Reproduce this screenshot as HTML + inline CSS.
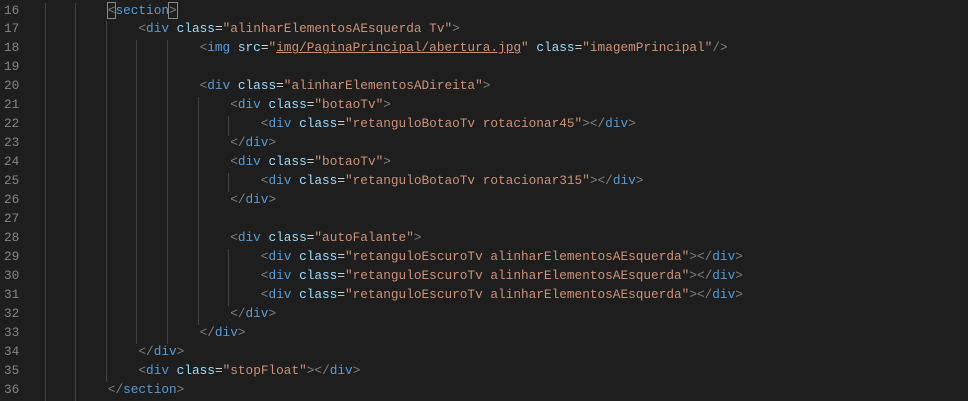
<!DOCTYPE html>
<html><head><style>
body{margin:0;background:#1e1e1e;width:968px;height:400px;overflow:hidden;position:relative;font-family:"Liberation Mono",monospace;font-size:12.75px;}
.ln{position:absolute;left:4px;color:#858585;}
.c{position:absolute;white-space:pre;color:#d4d4d4;}
.g{position:absolute;width:1px;background:#404040;}
.p{color:#808080}.t{color:#569cd6}.a{color:#9cdcfe}.s{color:#ce9178}.e{color:#d4d4d4}
.u{text-decoration:underline;text-decoration-color:#ce9178}
.box{outline:1px solid #888;}
</style></head><body>
<div id="r"></div>
<script>
const L=[
[16,3,'<span class="p box">&lt;</span><span class="t">section</span><span class="p box">&gt;</span>',2],
[17,4,'<span class="p">&lt;</span><span class="t">div</span> <span class="a">class</span><span class="e">=</span><span class="s">"alinharElementosAEsquerda Tv"</span><span class="p">&gt;</span>',3],
[18,6,'<span class="p">&lt;</span><span class="t">img</span> <span class="a">src</span><span class="e">=</span><span class="s">"<span class="u">img/PaginaPrincipal/abertura.jpg</span>"</span> <span class="a">class</span><span class="e">=</span><span class="s">"imagemPrincipal"</span><span class="p">/&gt;</span>',5],
[19,0,'',5],
[20,6,'<span class="p">&lt;</span><span class="t">div</span> <span class="a">class</span><span class="e">=</span><span class="s">"alinharElementosADireita"</span><span class="p">&gt;</span>',5],
[21,7,'<span class="p">&lt;</span><span class="t">div</span> <span class="a">class</span><span class="e">=</span><span class="s">"botaoTv"</span><span class="p">&gt;</span>',6],
[22,8,'<span class="p">&lt;</span><span class="t">div</span> <span class="a">class</span><span class="e">=</span><span class="s">"retanguloBotaoTv rotacionar45"</span><span class="p">&gt;&lt;/</span><span class="t">div</span><span class="p">&gt;</span>',7],
[23,7,'<span class="p">&lt;/</span><span class="t">div</span><span class="p">&gt;</span>',6],
[24,7,'<span class="p">&lt;</span><span class="t">div</span> <span class="a">class</span><span class="e">=</span><span class="s">"botaoTv"</span><span class="p">&gt;</span>',6],
[25,8,'<span class="p">&lt;</span><span class="t">div</span> <span class="a">class</span><span class="e">=</span><span class="s">"retanguloBotaoTv rotacionar315"</span><span class="p">&gt;&lt;/</span><span class="t">div</span><span class="p">&gt;</span>',7],
[26,7,'<span class="p">&lt;/</span><span class="t">div</span><span class="p">&gt;</span>',6],
[27,0,'',6],
[28,7,'<span class="p">&lt;</span><span class="t">div</span> <span class="a">class</span><span class="e">=</span><span class="s">"autoFalante"</span><span class="p">&gt;</span>',6],
[29,8,'<span class="p">&lt;</span><span class="t">div</span> <span class="a">class</span><span class="e">=</span><span class="s">"retanguloEscuroTv alinharElementosAEsquerda"</span><span class="p">&gt;&lt;/</span><span class="t">div</span><span class="p">&gt;</span>',7],
[30,8,'<span class="p">&lt;</span><span class="t">div</span> <span class="a">class</span><span class="e">=</span><span class="s">"retanguloEscuroTv alinharElementosAEsquerda"</span><span class="p">&gt;&lt;/</span><span class="t">div</span><span class="p">&gt;</span>',7],
[31,8,'<span class="p">&lt;</span><span class="t">div</span> <span class="a">class</span><span class="e">=</span><span class="s">"retanguloEscuroTv alinharElementosAEsquerda"</span><span class="p">&gt;&lt;/</span><span class="t">div</span><span class="p">&gt;</span>',7],
[32,7,'<span class="p">&lt;/</span><span class="t">div</span><span class="p">&gt;</span>',6],
[33,6,'<span class="p">&lt;/</span><span class="t">div</span><span class="p">&gt;</span>',5],
[34,4,'<span class="p">&lt;/</span><span class="t">div</span><span class="p">&gt;</span>',3],
[35,4,'<span class="p">&lt;</span><span class="t">div</span> <span class="a">class</span><span class="e">=</span><span class="s">"stopFloat"</span><span class="p">&gt;&lt;/</span><span class="t">div</span><span class="p">&gt;</span>',3],
[36,3,'<span class="p">&lt;/</span><span class="t">section</span><span class="p">&gt;</span>',2]];
let h='';const LH=18.95;
L.forEach((l,i)=>{const top=2.5+i*LH;
h+=`<div class="ln" style="top:${top}px">${l[0]}</div>`;
for(let k=1;k<=l[3];k++)h+=`<div class="g" style="left:${Math.round(14+30.6*k)}px;top:${top}px;height:${LH+0.5}px"></div>`;
h+=`<div class="c" style="left:${16+30.6*l[1]}px;top:${top}px">${l[2]}</div>`;});
document.getElementById('r').innerHTML=h;
</script>
</body></html>
